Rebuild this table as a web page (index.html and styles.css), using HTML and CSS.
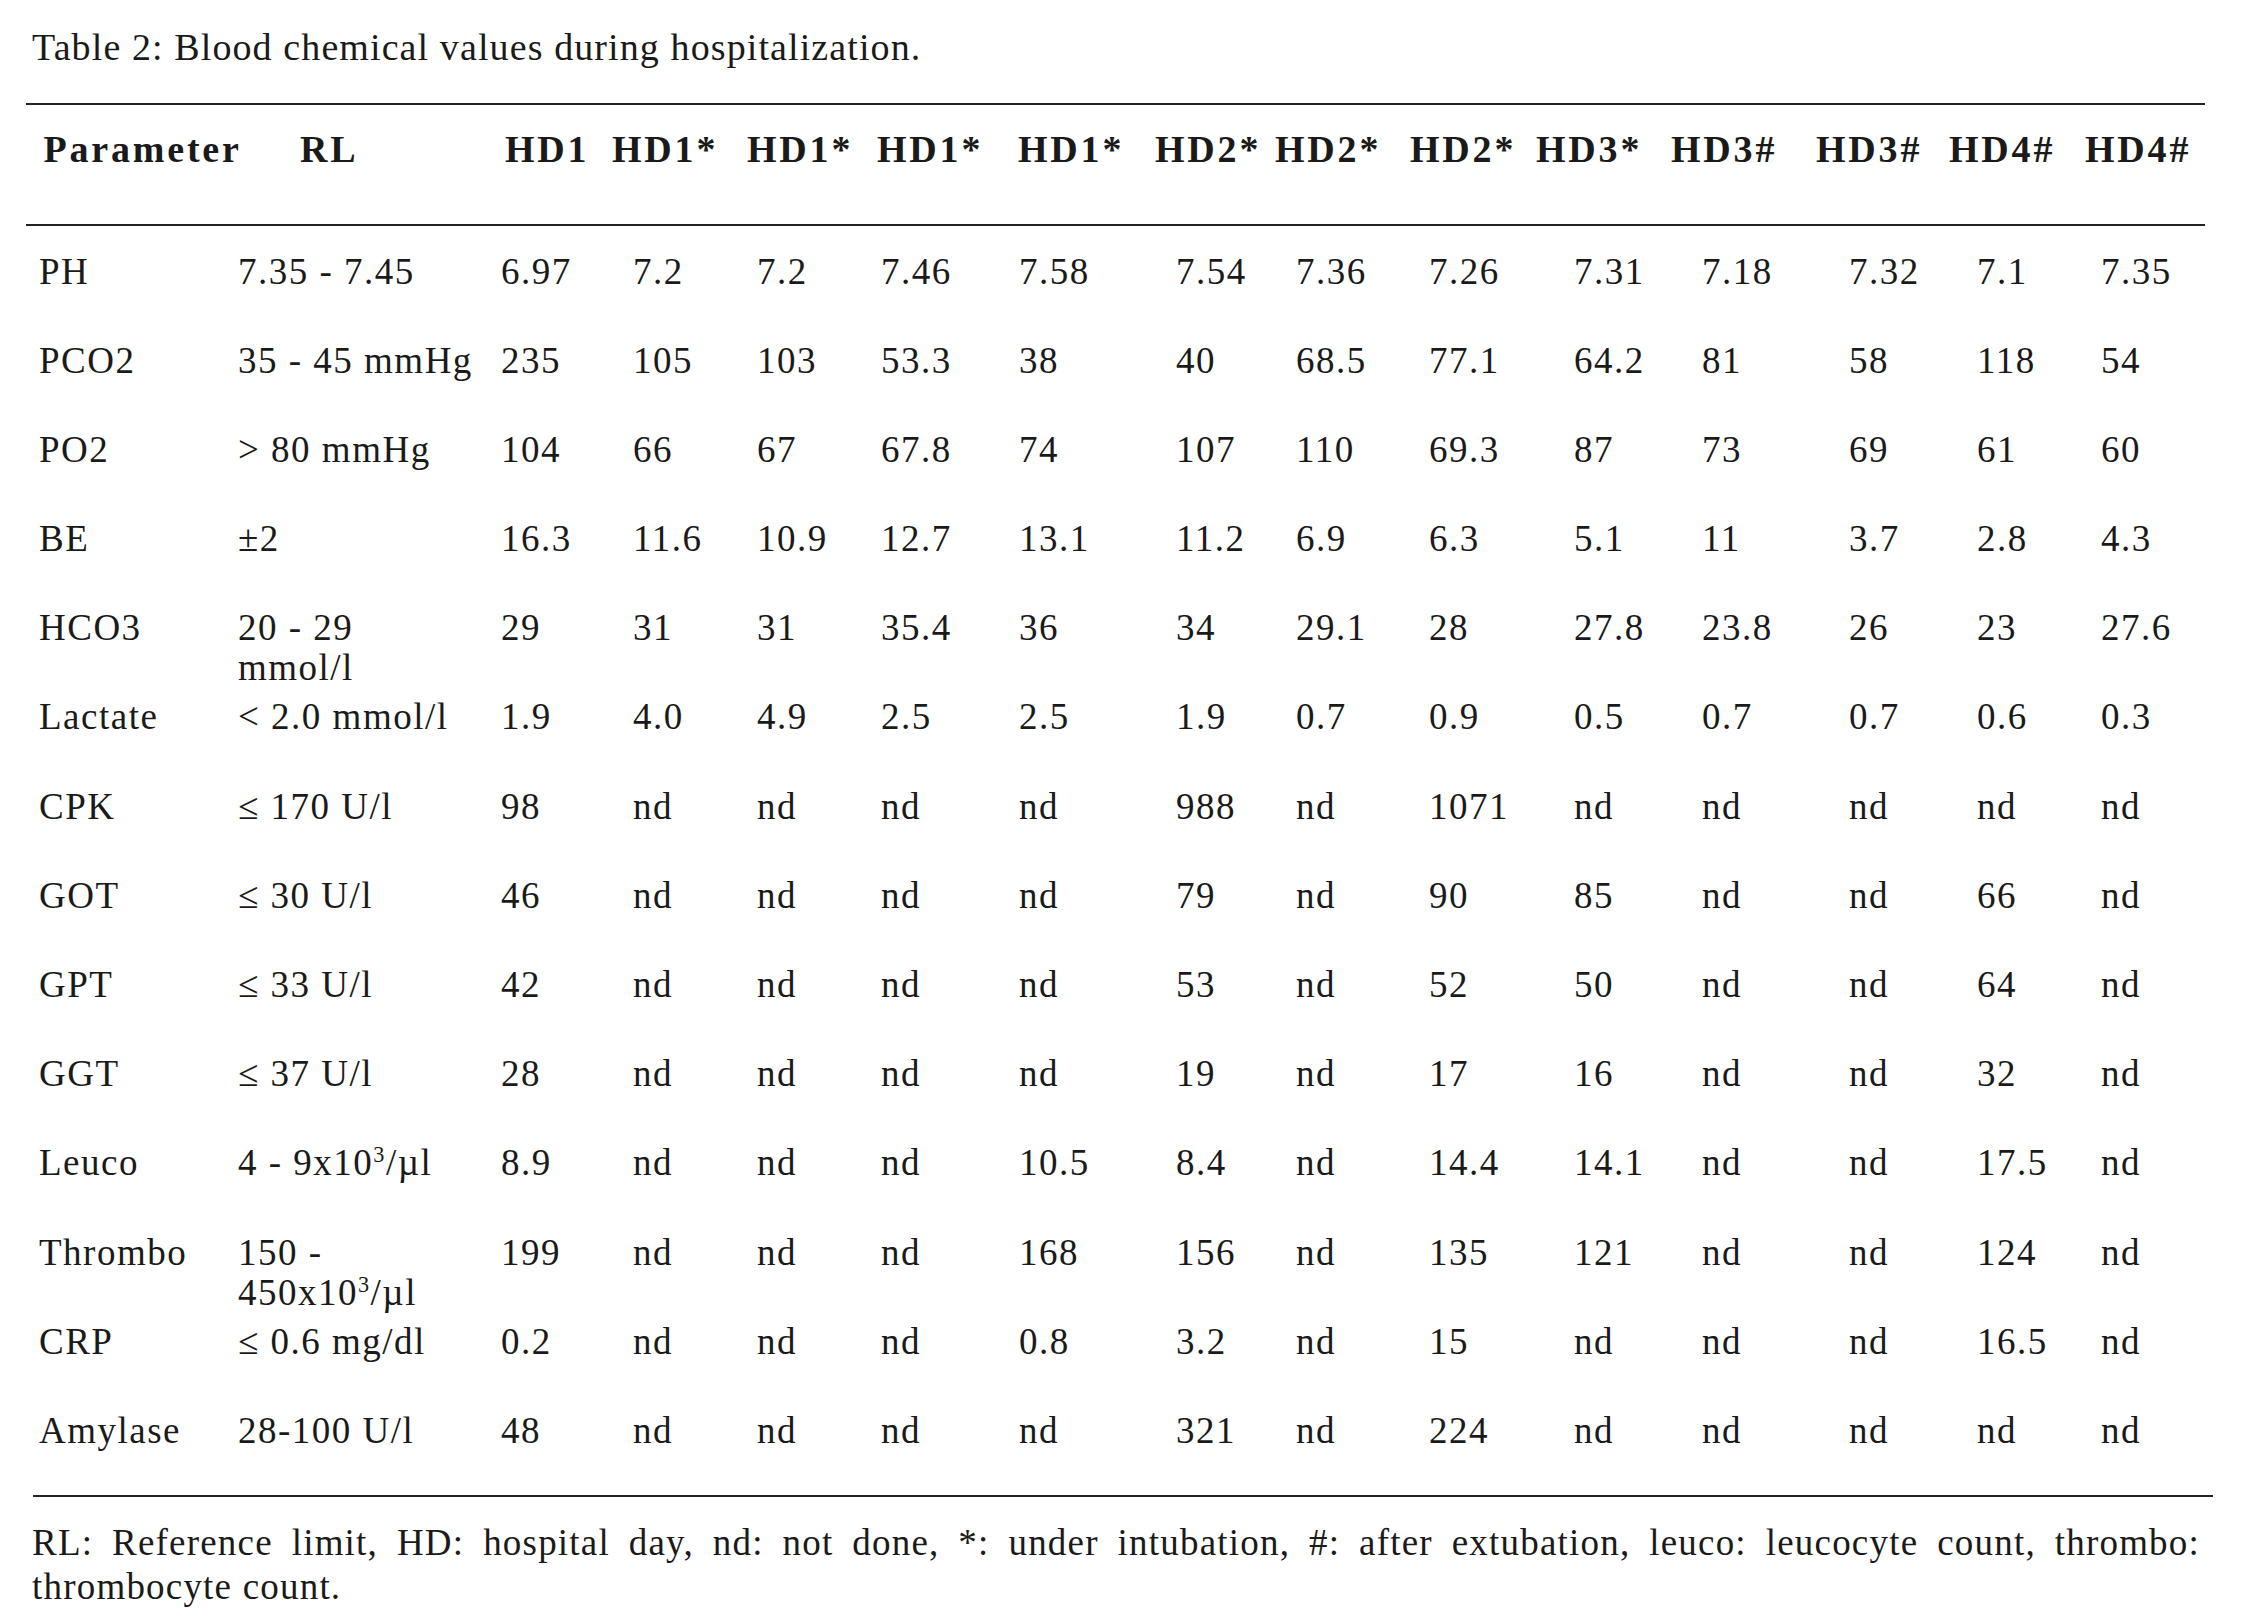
FILE: index.html
```html
<!DOCTYPE html>
<html lang="en">
<head>
<meta charset="utf-8">
<title>Table 2: Blood chemical values during hospitalization.</title>
<link rel="stylesheet" href="styles.css">
</head>
<body>
<div class="page">
  <p class="caption">Table 2: Blood chemical values during hospitalization.</p>
  <div class="table">
    <div class="thead">
      <div>Parameter</div><div>RL</div><div>HD1</div><div>HD1*</div><div>HD1*</div><div>HD1*</div><div>HD1*</div><div>HD2*</div><div>HD2*</div><div>HD2*</div><div>HD3*</div><div>HD3#</div><div>HD3#</div><div>HD4#</div><div>HD4#</div>
    </div>
    <div class="tbody">
      <div class="row"><div>PH</div><div>7.35 - 7.45</div><div>6.97</div><div>7.2</div><div>7.2</div><div>7.46</div><div>7.58</div><div>7.54</div><div>7.36</div><div>7.26</div><div>7.31</div><div>7.18</div><div>7.32</div><div>7.1</div><div>7.35</div></div>
      <div class="row"><div>PCO2</div><div>35 - 45 mmHg</div><div>235</div><div>105</div><div>103</div><div>53.3</div><div>38</div><div>40</div><div>68.5</div><div>77.1</div><div>64.2</div><div>81</div><div>58</div><div>118</div><div>54</div></div>
      <div class="row"><div>PO2</div><div>&gt; 80 mmHg</div><div>104</div><div>66</div><div>67</div><div>67.8</div><div>74</div><div>107</div><div>110</div><div>69.3</div><div>87</div><div>73</div><div>69</div><div>61</div><div>60</div></div>
      <div class="row"><div>BE</div><div>±2</div><div>16.3</div><div>11.6</div><div>10.9</div><div>12.7</div><div>13.1</div><div>11.2</div><div>6.9</div><div>6.3</div><div>5.1</div><div>11</div><div>3.7</div><div>2.8</div><div>4.3</div></div>
      <div class="row"><div>HCO3</div><div>20 - 29<br>mmol/l</div><div>29</div><div>31</div><div>31</div><div>35.4</div><div>36</div><div>34</div><div>29.1</div><div>28</div><div>27.8</div><div>23.8</div><div>26</div><div>23</div><div>27.6</div></div>
      <div class="row"><div>Lactate</div><div>&lt; 2.0 mmol/l</div><div>1.9</div><div>4.0</div><div>4.9</div><div>2.5</div><div>2.5</div><div>1.9</div><div>0.7</div><div>0.9</div><div>0.5</div><div>0.7</div><div>0.7</div><div>0.6</div><div>0.3</div></div>
      <div class="row"><div>CPK</div><div>≤ 170 U/l</div><div>98</div><div>nd</div><div>nd</div><div>nd</div><div>nd</div><div>988</div><div>nd</div><div>1071</div><div>nd</div><div>nd</div><div>nd</div><div>nd</div><div>nd</div></div>
      <div class="row"><div>GOT</div><div>≤ 30 U/l</div><div>46</div><div>nd</div><div>nd</div><div>nd</div><div>nd</div><div>79</div><div>nd</div><div>90</div><div>85</div><div>nd</div><div>nd</div><div>66</div><div>nd</div></div>
      <div class="row"><div>GPT</div><div>≤ 33 U/l</div><div>42</div><div>nd</div><div>nd</div><div>nd</div><div>nd</div><div>53</div><div>nd</div><div>52</div><div>50</div><div>nd</div><div>nd</div><div>64</div><div>nd</div></div>
      <div class="row"><div>GGT</div><div>≤ 37 U/l</div><div>28</div><div>nd</div><div>nd</div><div>nd</div><div>nd</div><div>19</div><div>nd</div><div>17</div><div>16</div><div>nd</div><div>nd</div><div>32</div><div>nd</div></div>
      <div class="row"><div>Leuco</div><div>4 - 9x10<sup class="sup">3</sup>/µl</div><div>8.9</div><div>nd</div><div>nd</div><div>nd</div><div>10.5</div><div>8.4</div><div>nd</div><div>14.4</div><div>14.1</div><div>nd</div><div>nd</div><div>17.5</div><div>nd</div></div>
      <div class="row"><div>Thrombo</div><div>150 -<br>450x10<sup class="sup">3</sup>/µl</div><div>199</div><div>nd</div><div>nd</div><div>nd</div><div>168</div><div>156</div><div>nd</div><div>135</div><div>121</div><div>nd</div><div>nd</div><div>124</div><div>nd</div></div>
      <div class="row"><div>CRP</div><div>≤ 0.6 mg/dl</div><div>0.2</div><div>nd</div><div>nd</div><div>nd</div><div>0.8</div><div>3.2</div><div>nd</div><div>15</div><div>nd</div><div>nd</div><div>nd</div><div>16.5</div><div>nd</div></div>
      <div class="row"><div>Amylase</div><div>28-100 U/l</div><div>48</div><div>nd</div><div>nd</div><div>nd</div><div>nd</div><div>321</div><div>nd</div><div>224</div><div>nd</div><div>nd</div><div>nd</div><div>nd</div><div>nd</div></div>
    </div>
    <div class="end-rule"></div>
  </div>
  <div class="note">
    <span class="note-line">RL: Reference limit, HD: hospital day, nd: not done, *: under intubation, #: after extubation, leuco: leucocyte count, thrombo:</span>
    <span class="note-last">thrombocyte count.</span>
  </div>
</div>
</body>
</html>
```

FILE: styles.css
```css
html, body {
  margin: 0;
  padding: 0;
  background: #ffffff;
}

body {
  color: #1a1a1a;
  font-family: "Liberation Serif", "Times New Roman", serif;
}

.page {
  padding: 27px 0 0 26px;
  width: 2179px;
}

.caption {
  margin: 0 0 36px 6px;
  font-size: 38px;
  line-height: 40px;
  font-weight: normal;
  letter-spacing: 1.1px;
}

.thead {
  display: grid;
  grid-template-columns: 256.5px 205px 107px 135px 130px 141px 137px 120px 135px 126px 135px 145px 133px 136px 1fr;
  padding: 24px 0 55px 17.5px;
  border-top: 2px solid #222;
  border-bottom: 2px solid #222;
  font-size: 38px;
  line-height: 40px;
  font-weight: bold;
  letter-spacing: 2.8px;
  white-space: nowrap;
}

.row {
  display: grid;
  grid-template-columns: 199px 263px 132px 124px 124px 138px 157px 120px 133px 145px 128px 147px 128px 124px 1fr;
  box-sizing: border-box;
  height: 89.2px;
  padding: 25.5px 0 0 13px;
  font-size: 37px;
  line-height: 40px;
  letter-spacing: 1.5px;
  white-space: nowrap;
}

.sup {
  font-size: 0.6em;
  line-height: 0;
  vertical-align: 0.6em;
}

.end-rule {
  margin: 20px 0 0 7px;
  width: 2180px;
  border-top: 2px solid #222;
}

.note {
  margin: 24px 0 0 6px;
  width: 2168px;
  font-size: 37px;
  line-height: 44px;
  letter-spacing: 1.2px;
}

.note-line {
  display: block;
  text-align: justify;
  text-align-last: justify;
}

.note-last {
  display: block;
}
```
